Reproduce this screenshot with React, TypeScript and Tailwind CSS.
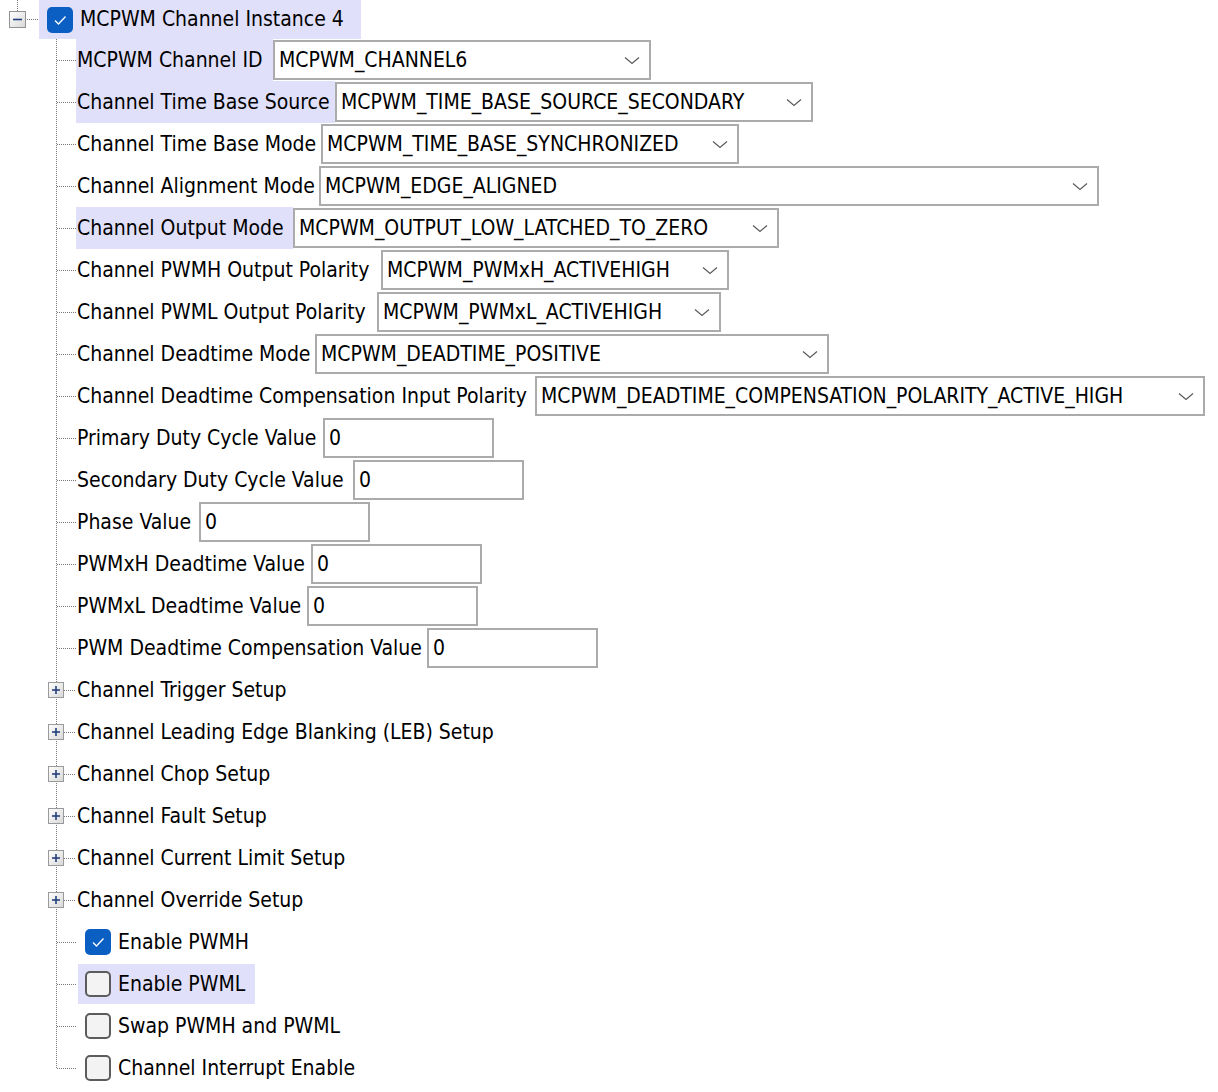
import React from "react";

type Row =
  | { kind: "select"; label: string; lw: string; bw: string; value: string; hl?: boolean }
  | { kind: "text"; label: string; lw: string; value: string }
  | { kind: "group"; label: string }
  | { kind: "check"; label: string; checked?: boolean; hl?: boolean };

const rows: Row[] = [
  { kind: "select", label: "MCPWM Channel ID", lw: "w-[197px]", bw: "w-[378px]", value: "MCPWM_CHANNEL6", hl: true },
  { kind: "select", label: "Channel Time Base Source", lw: "w-[259px]", bw: "w-[478px]", value: "MCPWM_TIME_BASE_SOURCE_SECONDARY", hl: true },
  { kind: "select", label: "Channel Time Base Mode", lw: "w-[245px]", bw: "w-[418px]", value: "MCPWM_TIME_BASE_SYNCHRONIZED" },
  { kind: "select", label: "Channel Alignment Mode", lw: "w-[243px]", bw: "w-[780px]", value: "MCPWM_EDGE_ALIGNED" },
  { kind: "select", label: "Channel Output Mode", lw: "w-[217px]", bw: "w-[486px]", value: "MCPWM_OUTPUT_LOW_LATCHED_TO_ZERO", hl: true },
  { kind: "select", label: "Channel PWMH Output Polarity", lw: "w-[305px]", bw: "w-[348px]", value: "MCPWM_PWMxH_ACTIVEHIGH" },
  { kind: "select", label: "Channel PWML Output Polarity", lw: "w-[301px]", bw: "w-[344px]", value: "MCPWM_PWMxL_ACTIVEHIGH" },
  { kind: "select", label: "Channel Deadtime Mode", lw: "w-[239px]", bw: "w-[514px]", value: "MCPWM_DEADTIME_POSITIVE" },
  { kind: "select", label: "Channel Deadtime Compensation Input Polarity", lw: "w-[459px]", bw: "w-[670px]", value: "MCPWM_DEADTIME_COMPENSATION_POLARITY_ACTIVE_HIGH" },
  { kind: "text", label: "Primary Duty Cycle Value", lw: "w-[247px]", value: "0" },
  { kind: "text", label: "Secondary Duty Cycle Value", lw: "w-[277px]", value: "0" },
  { kind: "text", label: "Phase Value", lw: "w-[123px]", value: "0" },
  { kind: "text", label: "PWMxH Deadtime Value", lw: "w-[235px]", value: "0" },
  { kind: "text", label: "PWMxL Deadtime Value", lw: "w-[231px]", value: "0" },
  { kind: "text", label: "PWM Deadtime Compensation Value", lw: "w-[351px]", value: "0" },
  { kind: "group", label: "Channel Trigger Setup" },
  { kind: "group", label: "Channel Leading Edge Blanking (LEB) Setup" },
  { kind: "group", label: "Channel Chop Setup" },
  { kind: "group", label: "Channel Fault Setup" },
  { kind: "group", label: "Channel Current Limit Setup" },
  { kind: "group", label: "Channel Override Setup" },
  { kind: "check", label: "Enable PWMH", checked: true },
  { kind: "check", label: "Enable PWML", hl: true },
  { kind: "check", label: "Swap PWMH and PWML" },
  { kind: "check", label: "Channel Interrupt Enable" },
];

const dot = "#7a7a7a";

function Gutter({ last, group }: { last?: boolean; group?: boolean }) {
  return (
    <svg width="76" height="42" className="shrink-0">
      <line x1="56.5" y1="0" x2="56.5" y2={last ? 21 : 42} stroke={dot} strokeDasharray="1 1" />
      <line x1={group ? 64 : 57} y1="21.5" x2="76" y2="21.5" stroke={dot} strokeDasharray="1 1" />
      {group && (
        <g>
          <defs>
            <linearGradient id="pb" x1="0" y1="0" x2="1" y2="1">
              <stop offset="0" stopColor="#ffffff" />
              <stop offset="1" stopColor="#d8d8d8" />
            </linearGradient>
          </defs>
          <rect x="48.5" y="13.5" width="15" height="15" fill="url(#pb)" stroke="#9a9a9a" />
          <line x1="52" y1="21" x2="60" y2="21" stroke="#23407e" strokeWidth="1.6" />
          <line x1="56" y1="17" x2="56" y2="25" stroke="#23407e" strokeWidth="1.6" />
        </g>
      )}
    </svg>
  );
}

function Chevron() {
  return (
    <svg width="16" height="9" viewBox="0 0 16 9" className="shrink-0">
      <polyline points="1,1.5 8,7.5 15,1.5" fill="none" stroke="#5a5a5a" strokeWidth="1.2" />
    </svg>
  );
}

function CheckBox({ checked }: { checked?: boolean }) {
  if (checked) {
    return (
      <div className="w-[26px] h-[26px] rounded-[5px] bg-[#0b5fc2] flex items-center justify-center shrink-0">
        <svg width="14" height="12" viewBox="0 0 14 12">
          <polyline points="2,6.5 5.5,10 12.5,2.5" fill="none" stroke="#ffffff" strokeWidth="1.3" />
        </svg>
      </div>
    );
  }
  return <div className="w-[26px] h-[26px] rounded-[5px] border-2 border-[#5c5c5c] bg-[#f3f3f3] shrink-0" />;
}

function TreeRow({ row, last }: { row: Row; last: boolean }) {
  if (row.kind === "select") {
    return (
      <div className="flex h-[42px]">
        <Gutter />
        <div className={`${row.lw} shrink-0 flex items-center pl-px whitespace-nowrap ${row.hl ? "bg-[#e0e0fa]" : ""}`}>
          {row.label}
        </div>
        <div className={`${row.bw} h-[40px] my-px shrink-0 border-2 border-[#ababab] bg-white flex items-center pl-[4px] pr-[9px]`}>
          <span className="flex-1 whitespace-nowrap">{row.value}</span>
          <Chevron />
        </div>
      </div>
    );
  }
  if (row.kind === "text") {
    return (
      <div className="flex h-[42px]">
        <Gutter />
        <div className={`${row.lw} shrink-0 flex items-center pl-px whitespace-nowrap`}>{row.label}</div>
        <div className="w-[171px] h-[40px] my-px shrink-0 border-2 border-[#ababab] bg-white flex items-center pl-[4px]">
          {row.value}
        </div>
      </div>
    );
  }
  if (row.kind === "group") {
    return (
      <div className="flex h-[42px]">
        <Gutter group />
        <div className="flex items-center pl-px whitespace-nowrap">{row.label}</div>
      </div>
    );
  }
  return (
    <div className="flex h-[42px]">
      <Gutter last={last} />
      <div className={`ml-[2px] my-[1px] flex items-center gap-[7px] pl-[7px] pr-[10px] whitespace-nowrap ${row.hl ? "bg-[#e0e0fa]" : ""}`}>
        <CheckBox checked={row.checked} />
        <span>{row.label}</span>
      </div>
    </div>
  );
}

export default function App() {
  return (
    <div
      className="w-[1218px] h-[1092px] overflow-hidden bg-white text-black text-[21px] leading-none"
      style={{ fontFamily: '"DejaVu Sans Condensed", "DejaVu Sans", sans-serif' }}
    >
      <div className="flex h-[39px]">
        <svg width="39" height="39" className="shrink-0">
          <defs>
            <linearGradient id="mb" x1="0" y1="0" x2="1" y2="1">
              <stop offset="0" stopColor="#ffffff" />
              <stop offset="1" stopColor="#d8d8d8" />
            </linearGradient>
          </defs>
          <line x1="17.5" y1="0" x2="17.5" y2="11" stroke={dot} strokeDasharray="1 1" />
          <rect x="9.5" y="11.5" width="16" height="16" fill="url(#mb)" stroke="#929292" />
          <line x1="13" y1="19.5" x2="22" y2="19.5" stroke="#23407e" strokeWidth="1.6" />
          <line x1="27" y1="19.5" x2="39" y2="19.5" stroke={dot} strokeDasharray="1 1" />
        </svg>
        <div className="w-[322px] flex items-center gap-[7px] pl-[8px] bg-[#e0e0fa]">
          <CheckBox checked />
          <span className="whitespace-nowrap">MCPWM Channel Instance 4</span>
        </div>
      </div>
      {rows.map((row, i) => (
        <TreeRow key={i} row={row} last={i === rows.length - 1} />
      ))}
    </div>
  );
}
